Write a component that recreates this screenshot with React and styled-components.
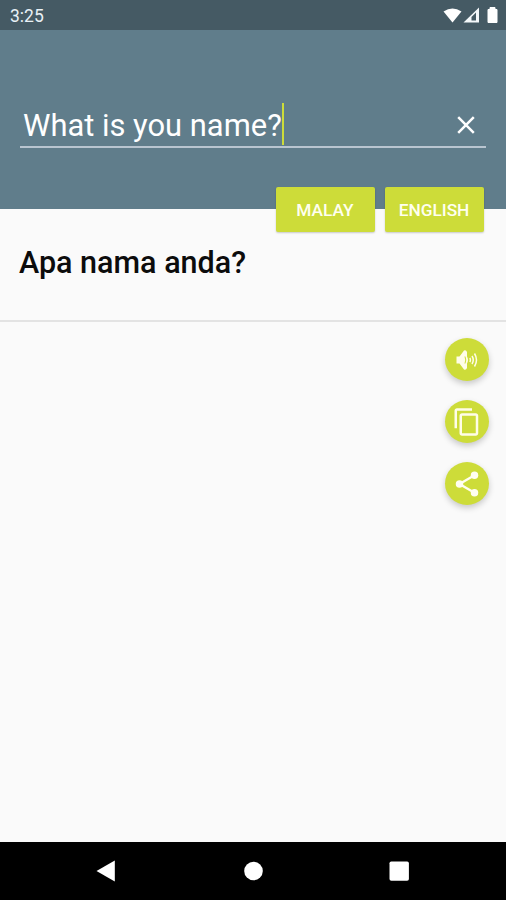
import styled, { createGlobalStyle } from 'styled-components';

export default function App() {
  return (
    <Screen>
      <GlobalStyle />
      <StatusBar>
        <Clock>3:25</Clock>
        <StatusIcons width="56" height="18" viewBox="0 0 56 18">
          <path d="M0.5 4.5Q9.5 -1.5 18.5 4.5L9.5 15.5Z" fill="#fff" />
          <path d="M20.5 15.5L36 0.5V15.5Z" fill="#f4f8fa" />
          <path d="M28.5 13.5V10L33 5.4V13.5Z" fill="#455a64" />
          <path d="M45 2.5H47V0.5H52V2.5H54V15.5H45Z" fill="#fff" stroke="#fff" strokeLinejoin="round" />
        </StatusIcons>
      </StatusBar>
      <Header>
        <InputRow>
          <Query>What is you name?</Query>
          <Caret />
          <ClearButton aria-label="Clear">
            <svg width="18" height="18" viewBox="0 0 18 18">
              <path d="M1.2 1.2L16.8 16.8M16.8 1.2L1.2 16.8" stroke="#fff" strokeWidth="2.5" />
            </svg>
          </ClearButton>
        </InputRow>
      </Header>
      <Languages>
        <LanguageButton>MALAY</LanguageButton>
        <LanguageButton>ENGLISH</LanguageButton>
      </Languages>
      <Result>
        <Translation>Apa nama anda?</Translation>
      </Result>
      <Actions>
        <ActionButton aria-label="Listen">
          <svg width="24" height="24" viewBox="0 0 24 24">
            <path d="M1.5 8.5H4.5L9 2.5Q11 1.5 12 4V8.5Q14 12 12 15.5V20Q11 22.5 9 21.5L4.5 15.5H1.5Z" fill="#fffde8" />
            <path d="M10 8.5Q11.5 12 10 15.5" fill="none" stroke="#cddc39" strokeWidth="1" />
            <path d="M14.8 10Q16 12 14.8 14M17 8Q19.5 12 17 16M19.5 5.5Q23.5 12 19.5 18.5" fill="none" stroke="#fffde8" strokeWidth="1.5" />
          </svg>
        </ActionButton>
        <ActionButton aria-label="Copy">
          <svg width="30" height="30" viewBox="0 0 24 24">
            <path
              d="M16 1H4C2.9 1 2 1.9 2 3V17H4V3H16ZM19 5H8C6.9 5 6 5.9 6 7V21C6 22.1 6.9 23 8 23H19C20.1 23 21 22.1 21 21V7C21 5.9 20.1 5 19 5ZM19 21H8V7H19Z"
              fill="#fffde8"
            />
          </svg>
        </ActionButton>
        <ActionButton aria-label="Share">
          <svg width="30" height="30" viewBox="0 0 24 24">
            <path d="M18 5L6 12L18 19" fill="none" stroke="#fffef0" strokeWidth="1.9" />
            <circle cx="18" cy="5" r="3" fill="#fffef0" />
            <circle cx="6" cy="12" r="3" fill="#fffef0" />
            <circle cx="18" cy="19" r="3" fill="#fffef0" />
          </svg>
        </ActionButton>
      </Actions>
      <NavBar>
        <svg width="22" height="24" viewBox="0 0 22 24">
          <path d="M1.5 12L19.8 1.5V22.5Z" fill="#fff" />
        </svg>
        <svg width="22" height="24" viewBox="0 0 22 24">
          <circle cx="11.5" cy="12" r="9.3" fill="#fff" />
        </svg>
        <svg width="22" height="24" viewBox="0 0 22 24">
          <rect x="1.5" y="2.4" width="19.4" height="19.4" rx="1.8" fill="#fff" />
        </svg>
      </NavBar>
    </Screen>
  );
}

// Styled Components

const GlobalStyle = createGlobalStyle`
  * {
    box-sizing: border-box;
  }

  body {
    margin: 0;
    font-family: Roboto, sans-serif;
  }

  svg {
    display: block;
  }
`;

const Screen = styled.div`
  display: flex;
  flex-direction: column;
  width: 506px;
  height: 900px;
  overflow: hidden;
  background-color: #fafafa;
`;

const StatusBar = styled.div`
  display: flex;
  justify-content: space-between;
  align-items: center;
  height: 30px;
  padding: 0 7px 0 10px;
  background-color: #455a64;
`;

const Clock = styled.span`
  padding-top: 2px;
  font-size: 17.5px;
  line-height: 20px;
  color: #e9f1f6;
`;

const StatusIcons = styled.svg`
  margin-top: 1px;
`;

const Header = styled.div`
  height: 179px;
  padding: 71px 20px 0;
  background-color: #607d8b;
`;

const InputRow = styled.div`
  display: flex;
  align-items: center;
  height: 47px;
  padding: 0 11px 0 3px;
  border-bottom: 2px solid #b9c5d0;
`;

const Query = styled.span`
  font-size: 30.9px;
  line-height: 40px;
  padding-top: 5px;
  white-space: nowrap;
  color: #fff;
`;

const Caret = styled.span`
  width: 2px;
  height: 42px;
  background-color: #cddc39;
`;

const ClearButton = styled.button`
  margin-left: auto;
  margin-top: 3px;
  padding: 0;
  border: none;
  background: none;
`;

const Languages = styled.div`
  position: relative;
  display: flex;
  justify-content: flex-end;
  gap: 10px;
  margin-top: -22px;
  padding-right: 22px;
`;

const LanguageButton = styled.button`
  width: 99px;
  height: 45px;
  padding: 0 1px 0 0;
  border: none;
  border-radius: 2px;
  background-color: #cddc39;
  box-shadow: 0 1px 2px rgba(0, 0, 0, 0.2);
  font-family: inherit;
  font-size: 17.3px;
  font-weight: 500;
  color: #fffff0;
`;

const Result = styled.div`
  height: 90px;
  padding: 11px 19px 0;
  border-bottom: 2px solid #e3e3e3;
`;

const Translation = styled.div`
  font-size: 30.5px;
  font-weight: 500;
  line-height: 40px;
  white-space: nowrap;
  color: #0c0c0c;
`;

const Actions = styled.div`
  display: flex;
  flex: 1;
  flex-direction: column;
  align-items: flex-end;
  gap: 19px;
  padding: 16px 17px 0 0;
`;

const ActionButton = styled.button`
  display: flex;
  justify-content: center;
  align-items: center;
  width: 44px;
  height: 43px;
  padding: 0;
  border: none;
  border-radius: 50%;
  background-color: #cddc39;
  box-shadow: 0 3px 6px rgba(0, 0, 0, 0.2);
`;

const NavBar = styled.div`
  display: flex;
  justify-content: space-between;
  align-items: center;
  height: 58px;
  padding: 0 96px 0 95px;
  background-color: #000;
`;
